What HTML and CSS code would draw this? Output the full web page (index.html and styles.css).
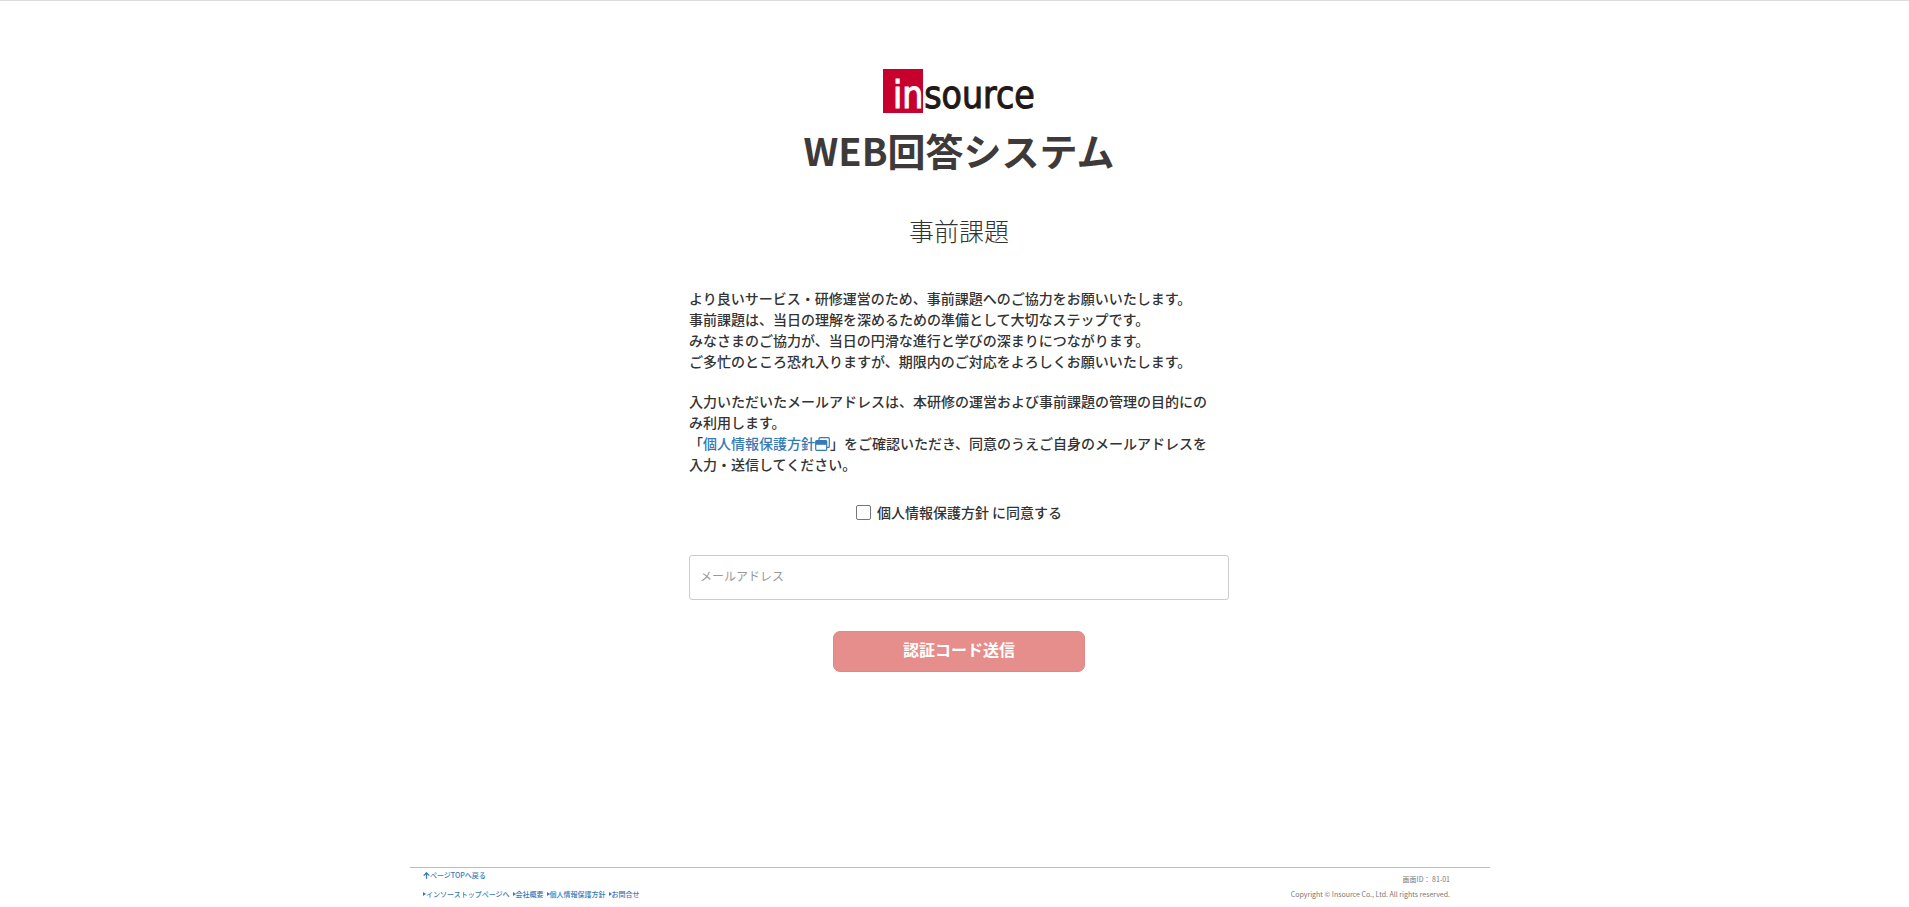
FILE: index.html
```html
<!DOCTYPE html>
<html lang="ja">
<head>
<meta charset="UTF-8">
<meta name="viewport" content="width=device-width, initial-scale=1">
<title>WEB回答システム</title>
<link rel="stylesheet" href="styles.css">
</head>
<body id="top">
<main class="main">
  <div class="logo" role="img" aria-label="insource"><span class="logo-mark">in</span><span class="logo-word">source</span></div>
  <h1 class="title">WEB回答システム</h1>
  <h2 class="subtitle">事前課題</h2>
  <form class="form">
    <p class="lead">より良いサービス・研修運営のため、事前課題へのご協力をお願いいたします。<br>事前課題は、当日の理解を深めるための準備として大切なステップです。<br>みなさまのご協力が、当日の円滑な進行と学びの深まりにつながります。<br>ご多忙のところ恐れ入りますが、期限内のご対応をよろしくお願いいたします。</p>
    <p class="lead">入力いただいたメールアドレスは、本研修の運営および事前課題の管理の目的にの<br>み利用します。<br>「<a class="link" href="#">個人情報保護方針<svg class="window-icon" viewBox="0 0 15 14" aria-hidden="true"><path d="M4 3V1.700Q4 .7 5 .7H13.300Q14.300 .7 14.300 1.700V9.400Q14.300 10.400 13.300 10.400H12" fill="none" stroke="currentColor" stroke-width="1.200"/><rect x=".7" y="3.700" width="11" height="9.600" rx="1" fill="none" stroke="currentColor" stroke-width="1.200"/><path d="M.7 3.700H11.700V7.800H.7Z" fill="currentColor"/></svg></a>」をご確認いただき、同意のうえご自身のメールアドレスを<br>入力・送信してください。</p>
    <div class="agree">
      <input class="agree-box" type="checkbox" id="agree">
      <label for="agree">個人情報保護方針 に同意する</label>
    </div>
    <input class="mail" type="email" aria-label="メールアドレス" placeholder="メールアドレス">
    <button class="submit" type="submit">認証コード送信</button>
  </form>
</main>
<footer class="footer">
  <div class="footer-inner">
    <nav class="footer-links">
      <a class="footer-link" href="#top"><svg class="arrow" viewBox="0 0 7 7" aria-hidden="true"><path d="M.7 3.600L3.500 .8L6.300 3.600M3.500 1V6.800" fill="none" stroke="currentColor" stroke-width="1.300"/></svg>ページTOPへ戻る</a>
      <div class="footer-row">
        <a class="footer-link" href="#"><span class="caret"></span>インソーストップページへ</a>
        <a class="footer-link" href="#"><span class="caret"></span>会社概要</a>
        <a class="footer-link" href="#"><span class="caret"></span>個人情報保護方針</a>
        <a class="footer-link" href="#"><span class="caret"></span>お問合せ</a>
      </div>
    </nav>
    <div class="footer-info">
      <span>画面ID： 81-01</span>
      <small class="copyright">Copyright © Insource Co., Ltd. All rights reserved.</small>
    </div>
  </div>
</footer>
</body>
</html>
```
FILE: styles.css
```css
* {
  box-sizing: border-box;
}

body {
  margin: 0;
  min-height: 100vh;
  display: flex;
  flex-direction: column;
  border-top: 1px solid #ddd;
  background: #fff;
  color: #333;
  font-family: "Noto Sans CJK JP", sans-serif;
  font-size: 14px;
  font-weight: 500;
  line-height: 21px;
}

.main {
  flex: 1;
  display: flex;
  flex-direction: column;
  align-items: center;
  padding: 68px 0 40px 9px;
}

.logo {
  display: flex;
  height: 44px;
  font-family: "DejaVu Sans Condensed", "DejaVu Sans", sans-serif;
  font-size: 37px;
  font-weight: 400;
  line-height: 54px;
  color: #231815;
  -webkit-text-stroke: 1px currentColor;
}

.logo-mark {
  width: 40px;
  display: flex;
  justify-content: flex-end;
  background: #c8002d;
  color: #fff;
}

.logo-word {
  padding-left: 1px;
}

.title {
  margin: 10px 0 0;
  font-size: 38px;
  font-weight: 700;
  line-height: 54px;
  color: #3e3a39;
}

.subtitle {
  margin: 34px 0 0;
  font-size: 25px;
  font-weight: 300;
  line-height: 38px;
}

.form {
  width: 100%;
  max-width: 540px;
  margin-top: 39px;
  display: flex;
  flex-direction: column;
  align-items: center;
}

.lead {
  width: 100%;
  margin: 0 0 19px;
}

.link {
  color: #337ab7;
  text-decoration: none;
}

.window-icon {
  width: 15px;
  height: 14px;
  vertical-align: -2px;
}

.agree {
  display: flex;
  align-items: center;
  gap: 6px;
  margin-top: 8px;
}

.agree-box {
  appearance: none;
  width: 15px;
  height: 15px;
  margin: 0;
  border: 1px solid #767676;
  border-radius: 2px;
  background: #fff;
}

.agree-box:checked {
  background: #337ab7;
}

.mail {
  width: 100%;
  height: 45px;
  margin-top: 32px;
  padding: 0 10px 4px;
  border: 1px solid #ccc;
  border-radius: 3px;
  font: inherit;
  font-size: 12px;
  font-weight: 400;
}

.mail::placeholder {
  color: #999;
}

.submit {
  width: 252px;
  height: 41px;
  margin-top: 31px;
  padding: 0 0 4px;
  border: 1px solid #df8886;
  border-radius: 7px;
  background: #e68e8c;
  color: #fff;
  font: inherit;
  font-size: 16px;
  font-weight: 700;
}

.footer {
  padding-right: 9px;
}

.footer-inner {
  max-width: 1080px;
  margin: 0 auto;
  padding: 2px 40px 8px 13px;
  display: flex;
  justify-content: space-between;
  border-top: 1px solid #bbb;
  font-size: 7px;
  line-height: 10px;
}

.footer-links {
  display: flex;
  flex-direction: column;
  gap: 9px;
}

.footer-row {
  display: flex;
  gap: 3px;
}

.footer-link {
  display: flex;
  align-items: center;
  color: #337ab7;
  text-decoration: none;
}

.arrow {
  width: 7px;
  height: 7px;
}

.caret {
  border: 2px solid transparent;
  border-left: 3px solid #337ab7;
  border-right: 0;
}

.footer-info {
  display: flex;
  flex-direction: column;
  align-items: flex-end;
  gap: 5px;
  padding-top: 4px;
  color: #777;
  font-weight: 400;
}

.copyright {
  font-size: 7px;
}
```
